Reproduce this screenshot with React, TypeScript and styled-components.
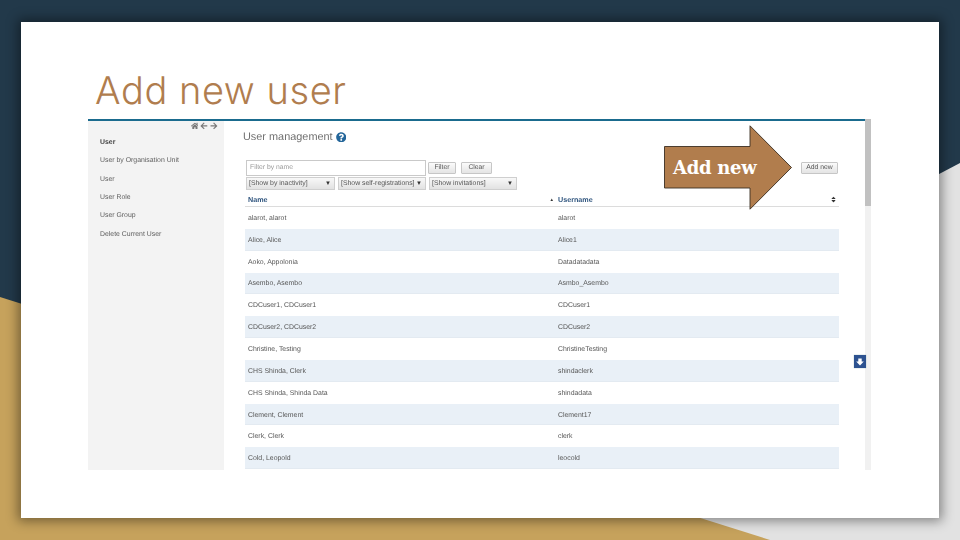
import React from "react";
import styled, { createGlobalStyle } from "styled-components";
import { FaHome, FaArrowLeft, FaArrowRight, FaQuestionCircle, FaSort } from "react-icons/fa";

const Global = createGlobalStyle`
  html, body { margin: 0; padding: 0; background: #22394a; }
`;

const Slide = styled.div`
  position: relative;
  width: 960px;
  height: 540px;
  overflow: hidden;
  padding: 22px 21px;
  box-sizing: border-box;
  background: #22394a;
`;

const Backdrop = styled.svg`
  position: absolute;
  inset: 0;
`;

const Card = styled.main`
  position: relative;
  width: 918px;
  height: 496px;
  background: #fff;
  box-shadow: 0 0 11px 3px rgba(0, 0, 0, 0.42);
  padding: 43px 0 0 67px;
  box-sizing: border-box;
`;

const Title = styled.h1`
  margin: 0 0 0 7px;
  height: 54px;
  font: 300 38px/52px Inter, "Open Sans", sans-serif;
  text-rendering: geometricPrecision;
  letter-spacing: 0.55px;
  color: #b07d4e;
`;

const Panel = styled.section`
  position: relative;
  width: 783px;
  height: 351px;
  box-sizing: border-box;
  border-top: 2px solid #1a6b8e;
  display: flex;
  font-family: "Liberation Sans", Arial, sans-serif;
  text-rendering: geometricPrecision;
  filter: blur(0.4px);
`;

const Sidebar = styled.aside`
  width: 136px;
  flex: none;
  background: #f3f3f3;
  display: flex;
  flex-direction: column;
`;

const SideTools = styled.div`
  height: 12px;
  padding: 1px 6px 0 0;
  box-sizing: content-box;
  display: flex;
  justify-content: flex-end;
  gap: 2px;
  color: #787878;
  font-size: 7.8px;
`;

const SideList = styled.ul`
  list-style: none;
  margin: 0;
  padding: 0 0 0 12px;
`;

const SideItem = styled.li<{ $active?: boolean }>`
  height: 18.35px;
  line-height: 18.35px;
  font-size: 6.9px;
  font-weight: ${(p) => (p.$active ? 700 : 400)};
  color: ${(p) => (p.$active ? "#444" : "#606060")};
`;

const Content = styled.div`
  flex: 1;
  min-width: 0;
  padding: 7px 0 0 19px;
  display: flex;
  flex-direction: column;
`;

const Heading = styled.h2`
  margin: 0 0 14px;
  height: 18px;
  font-size: 10.9px;
  line-height: 18px;
  font-weight: 400;
  color: #707070;
  display: flex;
  align-items: center;
  align-self: flex-start;
  gap: 3px;
  svg { color: #24669a; font-size: 10.5px; }
`;

const Controls = styled.div`
  width: 592px;
  margin-left: 3px;
  display: flex;
  flex-direction: column;
  gap: 1px;
`;

const FilterRow = styled.div`
  display: flex;
  align-items: center;
  height: 16px;
`;

const FilterInput = styled.div`
  width: 180px;
  height: 16px;
  box-sizing: border-box;
  border: 1px solid #c9c9c9;
  font-size: 6.8px;
  line-height: 14px;
  color: #9a9a9a;
  padding-left: 3px;
  margin-right: 2px;
`;

const Button = styled.button<{ $w: number }>`
  width: ${(p) => p.$w}px;
  height: 12px;
  padding: 0;
  margin: 0 5px 0 0;
  box-sizing: border-box;
  border: 1px solid #c6c6c6;
  border-radius: 1px;
  background: linear-gradient(#fbfbfb, #e4e4e4);
  color: #555;
  font: 400 6.8px/10px "Liberation Sans", Arial, sans-serif;
  text-rendering: geometricPrecision;
`;

const AddButton = styled(Button)`
  margin: 0 0 0 auto;
`;

const SelectRow = styled.div`
  display: flex;
  gap: 3px;
`;

const FakeSelect = styled.div<{ $w: number }>`
  width: ${(p) => p.$w}px;
  height: 13px;
  box-sizing: border-box;
  border: 1px solid #cfcfcf;
  background: linear-gradient(#f8f8f8, #e2e2e2);
  display: flex;
  justify-content: space-between;
  align-items: center;
  padding: 0 3px 0 2px;
  font-size: 6.9px;
  color: #555;
  i { font-style: normal; font-size: 6px; color: #333; }
`;

const Table = styled.div`
  width: 594px;
  margin-top: 2px;
  margin-left: 2px;
`;

const HeadRow = styled.div`
  height: 15px;
  display: grid;
  grid-template-columns: 310px 1fr 8px;
  align-items: center;
  border-bottom: 1px solid #dcdcdc;
  padding: 1px 1px 0 3px;
  box-sizing: border-box;
  font-size: 7.2px;
  font-weight: 700;
  color: #31567f;
  svg { font-size: 7px; color: #333; }
`;

const NameHead = styled.span`
  display: flex;
  justify-content: space-between;
  padding-right: 4px;
  i { font-style: normal; font-size: 4.5px; color: #333; line-height: 9px; }
`;

const Row = styled.div<{ $striped: boolean }>`
  height: 21.85px;
  box-sizing: border-box;
  display: grid;
  grid-template-columns: 310px 1fr;
  align-items: center;
  padding: 2px 0 0 3px;
  font-size: 6.9px;
  color: #555;
  background: ${(p) => (p.$striped ? "#e9f0f7" : "#fff")};
  border-bottom: 1px solid ${(p) => (p.$striped ? "#e3eaf1" : "#fff")};
`;

const Scrollbar = styled.div`
  width: 6px;
  flex: none;
  background: #f1f1f1;
  margin-top: -2px;
`;

const Thumb = styled.div`
  height: 87px;
  background: #c1c1c1;
`;

const Floating = styled.div`
  position: absolute;
  left: 766px;
  top: 234px;
  width: 12px;
  height: 13px;
  background: #2d5290;
  display: flex;
  align-items: center;
  justify-content: center;
  box-shadow: 0 0 1px #8aa;
`;

const Callout = styled.div`
  position: absolute;
  left: 643px;
  top: 103px;
  width: 129px;
  height: 85px;
`;

const CalloutShape = styled.svg`
  position: absolute;
  inset: 0;
`;

const CalloutLabel = styled.span`
  position: absolute;
  left: 9px;
  top: 31px;
  font: 700 18px/24px "DejaVu Serif", "Liberation Serif", serif;
  letter-spacing: -0.3px;
  color: #fff;
  white-space: nowrap;
`;

const sideItems = ["User by Organisation Unit", "User", "User Role", "User Group", "Delete Current User"];

const users: [string, string][] = [
  ["alarot, alarot", "alarot"],
  ["Alice, Alice", "Alice1"],
  ["Aoko, Appolonia", "Datadatadata"],
  ["Asembo, Asembo", "Asmbo_Asembo"],
  ["CDCuser1, CDCuser1", "CDCuser1"],
  ["CDCuser2, CDCuser2", "CDCuser2"],
  ["Christine, Testing", "ChristineTesting"],
  ["CHS Shinda, Clerk", "shindaclerk"],
  ["CHS Shinda, Shinda Data", "shindadata"],
  ["Clement, Clement", "Clement17"],
  ["Clerk, Clerk", "clerk"],
  ["Cold, Leopold", "leocold"],
];

export default function App() {
  return (
    <Slide>
      <Global />
      <Backdrop width="960" height="540" viewBox="0 0 960 540">
        <rect width="960" height="540" fill="#22394a" />
        <polygon points="960,163 700,300 700,540 960,540" fill="#e2e2e2" />
        <polygon points="0,297 770,540 0,540" fill="#c6a25c" />
      </Backdrop>
      <Card>
        <Title>Add new user</Title>
        <Panel>
          <Sidebar>
            <SideTools>
              <FaHome />
              <FaArrowLeft />
              <FaArrowRight />
            </SideTools>
            <SideList>
              <SideItem $active>User</SideItem>
              {sideItems.map((s, i) => (
                <SideItem key={i}>{s}</SideItem>
              ))}
            </SideList>
          </Sidebar>
          <Content>
            <Heading>
              User management <FaQuestionCircle />
            </Heading>
            <Controls>
              <FilterRow>
                <FilterInput>Filter by name</FilterInput>
                <Button $w={28}>Filter</Button>
                <Button $w={31}>Clear</Button>
                <AddButton $w={37}>Add new</AddButton>
              </FilterRow>
              <SelectRow>
                <FakeSelect $w={89}>[Show by inactivity]<i>▼</i></FakeSelect>
                <FakeSelect $w={88}>[Show self-registrations]<i>▼</i></FakeSelect>
                <FakeSelect $w={88}>[Show invitations]<i>▼</i></FakeSelect>
              </SelectRow>
            </Controls>
            <Table>
              <HeadRow>
                <NameHead>Name<i>▲</i></NameHead>
                <span>Username</span>
                <FaSort />
              </HeadRow>
              {users.map(([name, username], i) => (
                <Row key={username} $striped={i % 2 === 1}>
                  <span>{name}</span>
                  <span>{username}</span>
                </Row>
              ))}
            </Table>
          </Content>
          <Scrollbar>
            <Thumb />
          </Scrollbar>
          <Floating>
            <svg width="8" height="8" viewBox="0 0 8 8">
              <polygon points="2.3,0.5 5.7,0.5 5.7,3.6 7.8,3.6 4,7.6 0.2,3.6 2.3,3.6" fill="#fff" />
            </svg>
          </Floating>
        </Panel>
        <Callout>
          <CalloutShape width="129" height="85" viewBox="0 0 129 85">
            <polygon
              points="0.5,21.5 86,21.5 86,0.8 127.5,42.5 86,84.2 86,63 0.5,63"
              fill="#b17d4d"
              stroke="#3b2f22"
              strokeWidth="0.9"
            />
          </CalloutShape>
          <CalloutLabel>Add new</CalloutLabel>
        </Callout>
      </Card>
    </Slide>
  );
}
